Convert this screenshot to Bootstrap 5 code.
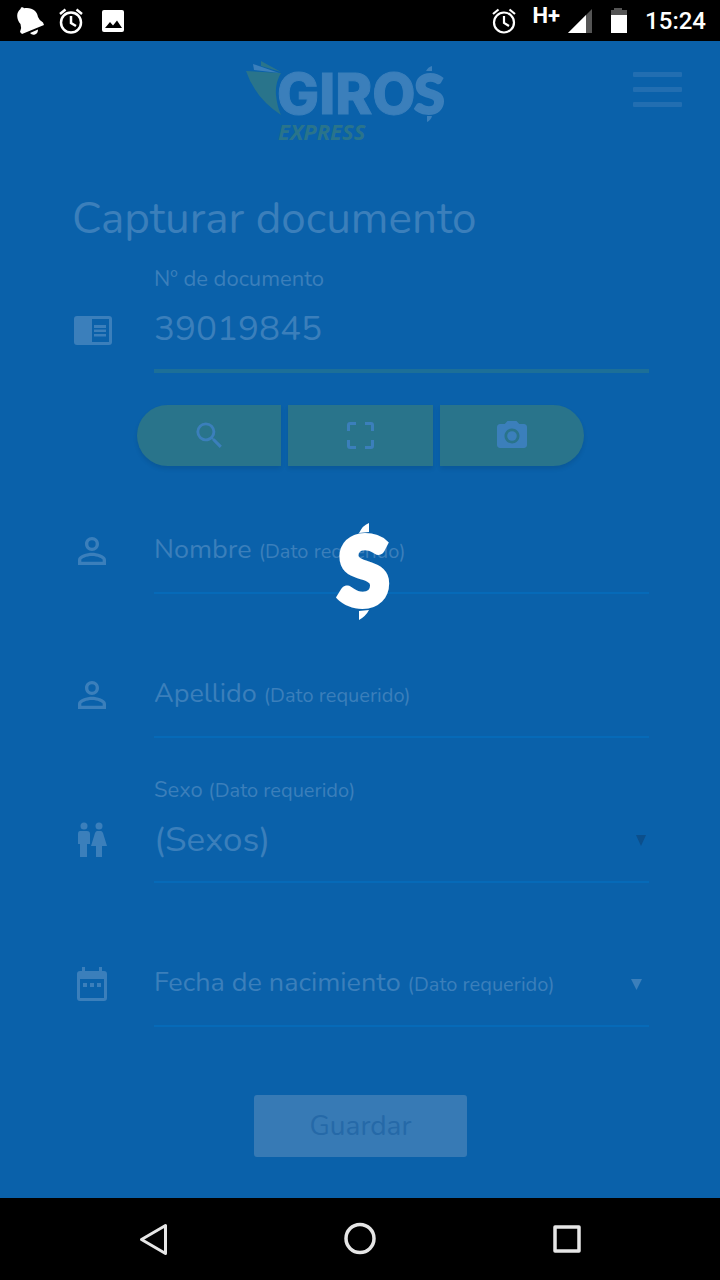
<!DOCTYPE html>
<html lang="es">
<head>
<meta charset="utf-8">
<meta name="viewport" content="width=device-width, initial-scale=1">
<title>Giros Express - Capturar documento</title>
<link rel="stylesheet" href="https://cdn.jsdelivr.net/npm/bootstrap@5.3.0/dist/css/bootstrap.min.css">
<style>
  :root { --sea: #0a61aa; --ink: #3b7fbb; --leaf: #29748b; --rule: #066ab8; }
  body { font-family: Nunito, Lato, sans-serif; background: #000; color: var(--ink); }
  svg { display: block; flex-shrink: 0; overflow: visible; }
  .status-bar { height: 41px; padding: 0 14px 0 15px; font-family: Roboto, sans-serif; color: #fff; }
  .clock { font-size: 24px; font-weight: 500; line-height: 40px; }
  .net-type { font-size: 22px; font-weight: 700; line-height: 29px; }
  .screen { background: var(--sea); padding-bottom: 41px; }
  .app-header { display: grid; grid-template-columns: 1fr auto 1fr; padding: 20px 38px 0; }
  .menu-btn { padding: 11px 0 0; border: 0; }
  .menu-btn span { display: block; width: 49px; height: 5px; margin-bottom: 10px; background: #226eb1; border-radius: 1px; }
  .form-area { padding: 50px 71px 0 72px; }
  .page-title { font-size: 44px; font-weight: 400; line-height: 56px; margin-bottom: 17px; }
  .field-row { min-height: 107px; }
  .field-row + .field-row { margin-top: 37px; }
  .glyph-box { width: 40px; height: 86px; margin-right: 42px; }
  .field-body { border-bottom: 2px solid var(--rule); min-width: 0; }
  .field-body.is-active { border-bottom: 4px solid #1c6f98; }
  .top-label { font-size: 22px; line-height: 30px; }
  .hint { font-size: 20px; }
  .inline-label { font-size: 27px; line-height: 80px; white-space: nowrap; }
  .plain-control { color: var(--ink); background: transparent; border: 0; border-radius: 0; outline: 0; width: 100%; min-width: 0; height: 75px; padding: 0 0 7px; font-size: 35px; appearance: none; }
  .short-control { height: 80px; }
  .arrow { position: absolute; right: 3px; bottom: 35px; pointer-events: none; }
  .arrow-date { right: 7px; }
  .action-group { display: grid; grid-template-columns: repeat(3, 1fr); gap: 7px; max-width: 447px; margin: 32px auto 21px; }
  .action-group .btn { height: 61px; border: 0; border-radius: 0; background: var(--leaf); color: var(--ink); box-shadow: 0 3px 4px #00000018; }
  .action-group .btn:first-child { border-radius: 31px 0 0 31px; }
  .action-group .btn:last-child { border-radius: 0 31px 31px 0; }
  .save-btn { width: 213px; height: 62px; margin-top: 68px; font-size: 28px; border: 0; border-radius: 3px; }
  .save-btn:disabled { background: #377ab5; color: #2569a8; opacity: 1; }
  .loader { position: absolute; inset: 0; padding-top: 482px; pointer-events: none; }
  .nav-keys { height: 82px; padding: 0 132px; }
</style>
</head>
<body class="d-flex flex-column min-vh-100">

<header class="status-bar d-flex justify-content-between align-items-center">
  <div class="d-flex align-items-center">
    <svg width="30" height="30" viewBox="0 0 30 30" fill="#fff"><path d="M6 1.500q2-1 3 .8C17 1 22 5 23 11q1 3 5 5.500l1 2.500L7 28l-2-2q2-4 .5-8C2 14 1 8 4 4.500Q6 3 6 1.500zM15 27l8-3.500q0 4-3 5-3 1-5-1.500z"/></svg>
    <svg class="ms-2" width="33" height="28" viewBox="0 0 33 28" fill="none" stroke="#fff" stroke-width="2.500"><circle cx="18" cy="15.500" r="10"/><path d="M18 9v7l5 3M7 7l5.500-4.500M29 7l-5.500-4.500"/></svg>
    <svg class="ms-3" width="22" height="22" viewBox="0 0 22 22"><rect width="22" height="22" rx="2" fill="#fff"/><path d="M3 18l5-6 3 3.500 4-5 5 7.500z" fill="#000"/></svg>
  </div>
  <div class="d-flex align-items-center">
    <svg width="26" height="28" viewBox="0 0 26 28" fill="none" stroke="#fff" stroke-width="2.200"><circle cx="13" cy="15.500" r="10"/><path d="M13 9v7l5 3M2 7l5.500-4.500M24 7l-5.500-4.500"/></svg>
    <span class="net-type align-self-start ms-3">H+</span>
    <svg class="ms-2" width="24" height="24" viewBox="0 0 24 24"><path d="M0 24L24 0v24z" fill="#555"/><path d="M0 24L18 6v18z" fill="#fff"/></svg>
    <svg class="mx-3" width="21" height="25" viewBox="0 0 21 25"><path d="M3 2h3V0h8v2h3v6H3z" fill="#555"/><path d="M3 7h16v18H3z" fill="#fff"/><path d="M3 2h16v5H3z" fill="#555"/></svg>
    <span class="clock">15:24</span>
  </div>
</header>

<main class="screen flex-grow-1 position-relative">
  <div class="app-header">
    <svg style="grid-column:2" width="228" height="80" viewBox="0 0 228 80" role="img" aria-label="Giros Express">
      <path d="M15 0l20 11-20-6z" fill="#29748b"/><path d="M7 3l26 9-25-3z" fill="#3b7fbb"/>
      <path d="M0 10l35 2q-6 10-5 22 1 11 5 20Q9 37 0 10z" fill="#29748b"/>
      <g fill="#3b7fbb">
        <text x="31" y="53" font-family="Inter, sans-serif" font-weight="800" font-size="56" stroke="#3b7fbb">GIRO</text>
        <text x="168" y="53" font-family="Lato, sans-serif" font-weight="900" font-size="56" stroke="#3b7fbb" stroke-width="2">S</text>
      </g>
      <path d="M180 10q2-4 6-5v5zM181 55h5q-1 4-5 6z" fill="#3b7fbb"/>
      <text x="32" y="79" fill="#29748b" font-family="'Open Sans', sans-serif" font-weight="700" font-style="italic" font-size="22">EXPRESS</text>
    </svg>
    <button class="menu-btn bg-transparent ms-auto align-self-start" type="button" aria-label="Menú"><span></span><span></span><span></span></button>
  </div>

  <form class="form-area">
    <h1 class="page-title">Capturar documento</h1>

    <div class="field-row d-flex align-items-end">
      <div class="glyph-box flex-shrink-0 d-flex align-items-center justify-content-center">
        <svg width="40" height="30" viewBox="0 0 40 30"><rect x="2" y="1" width="38" height="29" rx="3" fill="#3b7fbb"/><path d="M20 4h17v23H20z" fill="#0a61aa"/><path d="M22 10h12v3H22zM22 14.500h12v2.500H22zM22 19h12v2.500H22z" fill="#3b7fbb"/></svg>
      </div>
      <div class="field-body is-active flex-grow-1">
        <label class="top-label d-block" for="doc">Nº de documento</label>
        <input class="plain-control d-block" id="doc" type="text" value="39019845">
      </div>
    </div>

    <div class="action-group">
      <button class="btn d-flex align-items-center justify-content-center" type="button" aria-label="Buscar"><svg width="35" height="35" viewBox="0 0 24 24" fill="currentColor"><path d="M15.500 14h-.79l-.28-.27A6.471 6.471 0 0 0 16 9.500 6.500 6.500 0 1 0 9.500 16c1.610 0 3.090-.59 4.230-1.570l.27.28v.79l5 4.990L20.490 19l-4.990-5zm-6 0C7.010 14 5 11.990 5 9.500S7.010 5 9.500 5 14 7.010 14 9.500 11.990 14 9.500 14z"/></svg></button>
      <button class="btn d-flex align-items-center justify-content-center" type="button" aria-label="Escanear"><svg width="27" height="27" viewBox="0 0 27 27" fill="none" stroke="currentColor" stroke-width="3"><path d="M1.500 9V3q0-1.500 1.500-1.500h6M18 1.500h6q1.500 0 1.500 1.500v6M25.500 18v6q0 1.500-1.500 1.500h-6M9 25.500H3q-1.500 0-1.500-1.500v-6"/></svg></button>
      <button class="btn d-flex align-items-center justify-content-center" type="button" aria-label="Tomar foto"><svg width="36" height="36" viewBox="0 0 24 24" fill="currentColor"><circle cx="12" cy="12" r="3.200"/><path d="M9 2L7.170 4H4c-1.100 0-2 .9-2 2v12c0 1.100.9 2 2 2h16c1.100 0 2-.9 2-2V6c0-1.100-.9-2-2-2h-3.170L15 2H9zm3 15c-2.760 0-5-2.240-5-5s2.240-5 5-5 5 2.240 5 5-2.240 5-5 5z"/></svg></button>
    </div>

    <div class="field-row d-flex align-items-end">
      <div class="glyph-box flex-shrink-0 d-flex align-items-center justify-content-center">
        <svg width="42" height="42" viewBox="0 0 24 24" fill="#3b7fbb"><path d="M12 5.900a2.100 2.100 0 1 1 0 4.200 2.100 2.100 0 0 1 0-4.200m0 9c2.970 0 6.100 1.460 6.100 2.100v1.100H5.900V17c0-.64 3.130-2.100 6.100-2.100M12 4C9.790 4 8 5.790 8 8s1.790 4 4 4 4-1.790 4-4-1.790-4-4-4zm0 9c-2.670 0-8 1.340-8 4v3h16v-3c0-2.660-5.330-4-8-4z"/></svg>
      </div>
      <div class="field-body flex-grow-1 d-flex">
        <label class="inline-label" for="nombre">Nombre <span class="hint">(Dato requerido)</span></label>
        <input class="plain-control short-control" id="nombre" type="text">
      </div>
    </div>

    <div class="field-row d-flex align-items-end">
      <div class="glyph-box flex-shrink-0 d-flex align-items-center justify-content-center">
        <svg width="42" height="42" viewBox="0 0 24 24" fill="#3b7fbb"><path d="M12 5.900a2.100 2.100 0 1 1 0 4.200 2.100 2.100 0 0 1 0-4.200m0 9c2.970 0 6.100 1.460 6.100 2.100v1.100H5.900V17c0-.64 3.130-2.100 6.100-2.100M12 4C9.790 4 8 5.790 8 8s1.790 4 4 4 4-1.790 4-4-1.790-4-4-4zm0 9c-2.670 0-8 1.340-8 4v3h16v-3c0-2.660-5.330-4-8-4z"/></svg>
      </div>
      <div class="field-body flex-grow-1 d-flex">
        <label class="inline-label" for="apellido">Apellido <span class="hint">(Dato requerido)</span></label>
        <input class="plain-control short-control" id="apellido" type="text">
      </div>
    </div>

    <div class="field-row d-flex align-items-end">
      <div class="glyph-box flex-shrink-0 d-flex align-items-center justify-content-center">
        <svg width="30" height="36" viewBox="0 0 30 36" fill="#3b7fbb"><circle cx="7" cy="4" r="3.500"/><circle cx="22" cy="4" r="3.500"/><path d="M3 9h7q3 0 3 3v10h-3v13H3V22H1V12q0-3 2-3zM20 9h4q1 0 2 2l4 13h-5v11h-6V24h-5l4-13q1-2 2-2z"/></svg>
      </div>
      <div class="field-body flex-grow-1 position-relative">
        <label class="top-label d-block" for="sexo">Sexo <span class="hint">(Dato requerido)</span></label>
        <select class="plain-control d-block" id="sexo"><option>(Sexos)</option></select>
        <svg class="arrow" width="10" height="11" viewBox="0 0 10 11"><path d="M0 0h10L5 11z" fill="#0b4f8c"/></svg>
      </div>
    </div>

    <div class="field-row d-flex align-items-end">
      <div class="glyph-box flex-shrink-0 d-flex align-items-center justify-content-center">
        <svg width="32" height="36" viewBox="0 0 32 36"><path d="M6 1h3v4h14V1h3v4h2q3 0 3 3v24q0 3-3 3H4q-3 0-3-3V8q0-3 3-3h2zM4 13v19h24V13z" fill="#3b7fbb" fill-rule="evenodd"/><path d="M7 17h4v4H7zM14 17h4v4h-4zM21 17h4v4h-4z" fill="#3b7fbb"/></svg>
      </div>
      <div class="field-body flex-grow-1 d-flex position-relative">
        <label class="inline-label" for="fecha">Fecha de nacimiento <span class="hint">(Dato requerido)</span></label>
        <input class="plain-control short-control" id="fecha" type="text">
        <svg class="arrow arrow-date" width="11" height="11" viewBox="0 0 11 11"><path d="M0 0h11L5.500 11z" fill="#3b7fbb"/></svg>
      </div>
    </div>

    <button class="btn save-btn d-block mx-auto" type="submit" disabled>Guardar</button>
  </form>

  <div class="loader d-flex justify-content-center align-items-start" role="status" aria-label="Cargando">
    <svg width="60" height="98" viewBox="0 0 60 98" fill="#fff"><path d="M29 10q4-8 10-10v9zM29 88l10-1q-3 6-10 10z"/><text x="8" y="82" font-family="Lato, sans-serif" font-weight="900" font-size="93" stroke="#fff" stroke-width="6">S</text></svg>
  </div>
</main>

<nav class="nav-keys d-flex justify-content-between align-items-center" aria-label="Sistema">
  <svg width="42" height="36" viewBox="0 0 42 36" fill="none" stroke="#e6e6e6" stroke-width="3" stroke-linejoin="round"><path d="M33.500 4.500v28L9.500 18.500z"/></svg>
  <svg width="36" height="36" viewBox="0 0 36 36" fill="none" stroke="#e6e6e6" stroke-width="3.500"><circle cx="18" cy="17.500" r="14"/></svg>
  <svg width="42" height="36" viewBox="0 0 42 36" fill="none" stroke="#e6e6e6" stroke-width="3.500" stroke-linejoin="round"><rect x="9" y="6" width="24" height="24"/></svg>
</nav>

<script src="https://cdn.jsdelivr.net/npm/bootstrap@5.3.0/dist/js/bootstrap.bundle.min.js"></script>
</body>
</html>
